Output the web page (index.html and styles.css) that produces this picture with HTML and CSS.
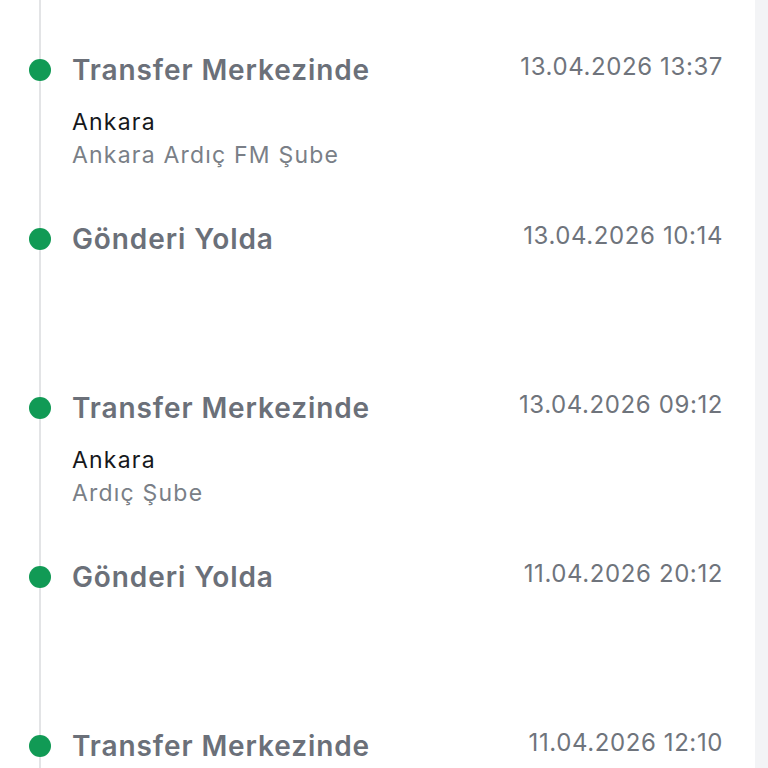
FILE: index.html
```html
<!DOCTYPE html>
<html lang="tr">
<head>
    <meta charset="UTF-8">
    <meta name="viewport" content="width=device-width, initial-scale=1.0">
    <title>Gönderi Hareketleri</title>
    <link rel="stylesheet" href="styles.css">
</head>
<body>
    <div class="card">
        <ul class="timeline">
            <li class="step">
                <span class="dot"></span>
                <div class="step-main">
                    <div class="step-title">Transfer Merkezinde</div>
                    <div class="step-city">Ankara</div>
                    <div class="step-branch">Ankara Ardıç FM Şube</div>
                </div>
                <div class="step-date">13.04.2026 13:37</div>
            </li>
            <li class="step">
                <span class="dot"></span>
                <div class="step-main">
                    <div class="step-title">Gönderi Yolda</div>
                </div>
                <div class="step-date">13.04.2026 10:14</div>
            </li>
            <li class="step">
                <span class="dot"></span>
                <div class="step-main">
                    <div class="step-title">Transfer Merkezinde</div>
                    <div class="step-city">Ankara</div>
                    <div class="step-branch">Ardıç Şube</div>
                </div>
                <div class="step-date">13.04.2026 09:12</div>
            </li>
            <li class="step">
                <span class="dot"></span>
                <div class="step-main">
                    <div class="step-title">Gönderi Yolda</div>
                </div>
                <div class="step-date">11.04.2026 20:12</div>
            </li>
            <li class="step">
                <span class="dot"></span>
                <div class="step-main">
                    <div class="step-title">Transfer Merkezinde</div>
                </div>
                <div class="step-date">11.04.2026 12:10</div>
            </li>
        </ul>
    </div>
</body>
</html>
```

FILE: styles.css
```css
html, body {
    margin: 0;
    height: 100%;
    overflow: hidden;
    background-color: #f3f4f6;
    font-family: Inter, "Liberation Sans", sans-serif;
}

.card {
    width: 755px;
    height: 100%;
    background-color: #fff;
}

.timeline {
    list-style: none;
    margin: 0 0 0 39px;
    padding: 53px 0 0 0;
    height: 100%;
    box-sizing: border-box;
    border-left: 2px solid #e3e4e6;
}

.step {
    position: relative;
    display: flex;
    align-items: flex-start;
    height: 169px;
    padding: 0 32px 0 31px;
    box-sizing: border-box;
}

.dot {
    position: absolute;
    left: -12px;
    top: 6px;
    width: 22px;
    height: 22px;
    border-radius: 50%;
    background-color: #119a55;
}

.step-main {
    flex: 1;
}

.step-title {
    font-size: 28px;
    line-height: 34px;
    font-weight: 600;
    letter-spacing: 0.9px;
    color: #6b7079;
}

.step-city {
    margin-top: 19px;
    font-size: 23px;
    line-height: 33px;
    letter-spacing: 1.2px;
    color: #16181c;
}

.step-branch {
    font-size: 23px;
    line-height: 33px;
    letter-spacing: 1.2px;
    color: #7a7f87;
}

.step-date {
    font-size: 24px;
    line-height: 28px;
    letter-spacing: 0.6px;
    color: #6f747c;
}
```
